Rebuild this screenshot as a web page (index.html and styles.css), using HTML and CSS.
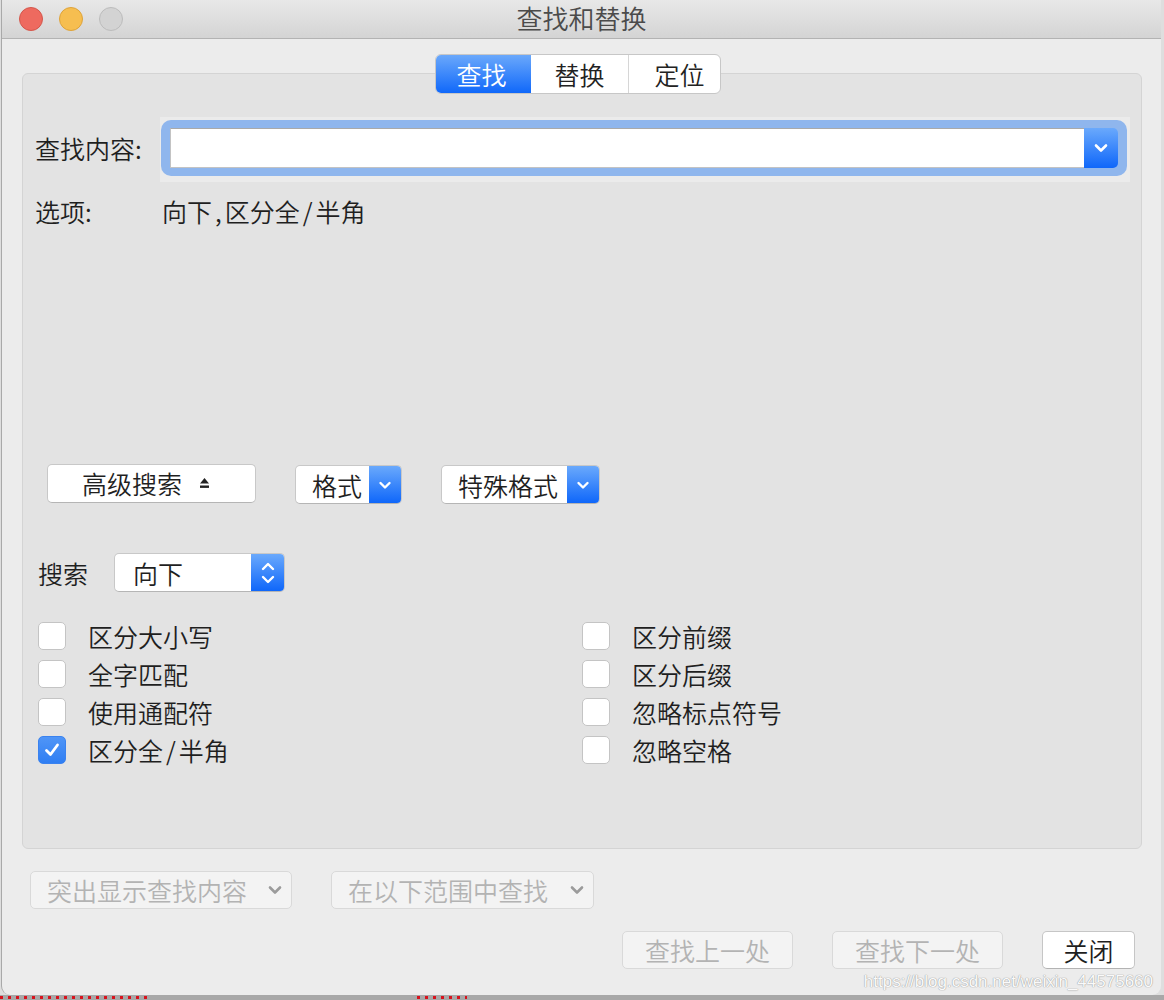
FILE: index.html
```html
<!DOCTYPE html>
<html lang="zh-CN">
<head>
<meta charset="utf-8">
<title>查找和替换</title>
<link rel="stylesheet" href="styles.css">
</head>
<body>
<div class="window">
  <div class="titlebar">
    <div class="lights">
      <span class="light red"></span>
      <span class="light yellow"></span>
      <span class="light gray"></span>
    </div>
    <div class="title">查找和替换</div>
    <div></div>
  </div>
  <div class="content">
    <div class="tabs">
      <div class="tab tab-1 active">查找</div>
      <div class="tab tab-2">替换</div>
      <div class="tab tab-3">定位</div>
    </div>
    <div class="panel">
      <div class="find-row">
        <div class="find-label">查找内容:</div>
        <div class="combo-wrap">
          <div class="combo-ring">
            <div class="combo">
              <div class="combo-field"></div>
              <div class="combo-btn">
                <svg width="16" height="10" viewBox="0 0 16 10"><polyline points="3,2.5 8,7.5 13,2.5" fill="none" stroke="#fff" stroke-width="2.6" stroke-linecap="round" stroke-linejoin="round"/></svg>
              </div>
            </div>
          </div>
        </div>
      </div>
      <div class="options-row">
        <span class="opt-label">选项:</span>
        <span class="opt-value">向下<span class="punc">,</span>区分全<span class="punc">/</span>半角</span>
      </div>
      <div class="btn-row">
        <div class="btn adv-btn">
          <span>高级搜索</span>
          <svg class="eject" width="13" height="16" viewBox="0 0 13 16"><polygon points="6.5,2 11,7.5 2,7.5" fill="#222"/><rect x="2" y="9.5" width="9" height="2.4" fill="#222"/></svg>
        </div>
        <div class="btn pop fmt-btn">
          <span class="pop-text">格式</span>
          <span class="pop-blue"><svg width="14" height="10" viewBox="0 0 14 10"><polyline points="2.5,3 7,7.5 11.5,3" fill="none" stroke="#fff" stroke-width="2.4" stroke-linecap="round" stroke-linejoin="round"/></svg></span>
        </div>
        <div class="btn pop special-btn">
          <span class="pop-text">特殊格式</span>
          <span class="pop-blue"><svg width="14" height="10" viewBox="0 0 14 10"><polyline points="2.5,3 7,7.5 11.5,3" fill="none" stroke="#fff" stroke-width="2.4" stroke-linecap="round" stroke-linejoin="round"/></svg></span>
        </div>
      </div>
      <div class="search-row">
        <div class="search-label">搜索</div>
        <div class="btn pop search-pop">
          <span class="pop-text search-text">向下</span>
          <span class="pop-blue stepper"><svg width="16" height="26" viewBox="0 0 16 26"><polyline points="3,9 8,4 13,9" fill="none" stroke="#fff" stroke-width="2.4" stroke-linecap="round" stroke-linejoin="round"/><polyline points="3,17 8,22 13,17" fill="none" stroke="#fff" stroke-width="2.4" stroke-linecap="round" stroke-linejoin="round"/></svg></span>
        </div>
      </div>
      <div class="checks">
        <div class="check"><span class="box"></span><span>区分大小写</span></div>
        <div class="check"><span class="box"></span><span>区分前缀</span></div>
        <div class="check"><span class="box"></span><span>全字匹配</span></div>
        <div class="check"><span class="box"></span><span>区分后缀</span></div>
        <div class="check"><span class="box"></span><span>使用通配符</span></div>
        <div class="check"><span class="box"></span><span>忽略标点符号</span></div>
        <div class="check"><span class="box checked"><svg width="20" height="20" viewBox="0 0 20 20"><polyline points="4.5,10.5 8.5,14.5 15.5,5" fill="none" stroke="#fff" stroke-width="2.8" stroke-linecap="round" stroke-linejoin="round"/></svg></span><span>区分全<span class="punc">/</span>半角</span></div>
        <div class="check"><span class="box"></span><span>忽略空格</span></div>
      </div>
    </div>
    <div class="popup-row">
      <div class="dis-pop pop-1">
        <span>突出显示查找内容</span>
        <svg width="16" height="10" viewBox="0 0 16 10"><polyline points="3,2.5 8,7.5 13,2.5" fill="none" stroke="#9b9b9b" stroke-width="2.6" stroke-linecap="round" stroke-linejoin="round"/></svg>
      </div>
      <div class="dis-pop pop-2">
        <span>在以下范围中查找</span>
        <svg width="16" height="10" viewBox="0 0 16 10"><polyline points="3,2.5 8,7.5 13,2.5" fill="none" stroke="#9b9b9b" stroke-width="2.6" stroke-linecap="round" stroke-linejoin="round"/></svg>
      </div>
    </div>
    <div class="action-row">
      <div class="act disabled">查找上一处</div>
      <div class="act disabled">查找下一处</div>
      <div class="act close">关闭</div>
    </div>
  </div>
  <div class="watermark">https://blog.csdn.net/weixin_44575660</div>
</div>
<div class="under">
  <span class="squig s1"></span>
  <span class="gap g1"></span>
  <span class="squig s2"></span>
</div>
</body>
</html>
```
FILE: styles.css
```css
* { box-sizing: border-box; }

html, body {
  margin: 0;
  padding: 0;
}

body {
  width: 1164px;
  height: 1000px;
  overflow: hidden;
  background: #dedede;
  font-family: "Noto Sans CJK SC", "Noto Sans", sans-serif;
  font-weight: 350;
  color: #1f1f1f;
}

.window {
  position: relative;
  margin-left: 1px;
  width: 1160px;
  height: 995px;
  background: #ececec;
  border-left: 1px solid #a9a9a9;
  border-radius: 0 0 9px 9px;
  overflow: hidden;
}

.titlebar {
  height: 39px;
  border-bottom: 1px solid #b3b3b3;
  background: linear-gradient(#e8e8e8, #d4d4d4);
  display: grid;
  grid-template-columns: 1fr auto 1fr;
  align-items: center;
}

.lights {
  display: flex;
  gap: 16px;
  padding-left: 17px;
}

.light {
  width: 24px;
  height: 24px;
  border-radius: 50%;
  display: block;
}

.red { background: #ee6a5f; border: 1px solid #d4574c; }
.yellow { background: #f6be50; border: 1px solid #dea33a; }
.gray { background: #d3d3d3; border: 1px solid #bcbcbc; }

.title {
  font-size: 26px;
  line-height: 30px;
  margin-top: -3px;
  color: #4b4b4b;
}

.content {
  padding: 15px 19px 0 20px;
}

.tabs {
  position: relative;
  z-index: 1;
  display: flex;
  width: max-content;
  margin-left: 413px;
  height: 40px;
  background: #fff;
  border: 1px solid #c7c7c7;
  border-radius: 6px;
  overflow: hidden;
}

.tab {
  display: flex;
  align-items: center;
  justify-content: center;
  font-size: 25px;
  color: #222;
}

.tab-1 { width: 95px; padding-right: 4px; }
.tab-2 { width: 98px; border-right: 1px solid #d6d6d6; }
.tab-3 { width: 91px; padding-left: 10px; }

.tab.active {
  background: linear-gradient(#6aa8fb, #1068fa);
  color: #fff;
}

.panel {
  margin-top: -21px;
  height: 776px;
  background: #e3e3e3;
  border: 1px solid #d4d4d4;
  border-radius: 6px;
  padding-top: 43px;
}

.find-row {
  display: flex;
  align-items: flex-start;
}

.find-label {
  width: 137px;
  padding-left: 12px;
  font-size: 25px;
  line-height: 30px;
  margin-top: 16px;
}

.combo-wrap {
  width: 970px;
  height: 65px;
  background: #ebebeb;
  padding: 3px 3px 6px 1px;
}

.combo-ring {
  height: 56px;
  background: #8fb6ed;
  border-radius: 10px;
  padding: 8px 9px;
}

.combo {
  display: flex;
  height: 40px;
}

.combo-field {
  flex: 1;
  background: #fff;
  border: 1px solid #c3c3c3;
  border-top-color: #a9a9a9;
  border-right: none;
}

.combo-btn {
  width: 34px;
  background: linear-gradient(#6aa9fc, #0f67fa);
  border-radius: 0 5px 5px 0;
  display: flex;
  align-items: center;
  justify-content: center;
}

.options-row {
  margin-top: 14px;
  display: flex;
  font-size: 25px;
  line-height: 30px;
}

.opt-label {
  width: 139px;
  padding-left: 12px;
}

.punc {
  padding: 0 3px;
}

.btn-row {
  margin-top: 237px;
  height: 40px;
  display: flex;
  align-items: center;
  gap: 39px;
  padding-left: 24px;
}

.btn {
  height: 39px;
  background: #fff;
  border: 1px solid #c8c8c8;
  border-bottom-color: #b5b5b5;
  border-radius: 5px;
  font-size: 25px;
  color: #1f1f1f;
  display: flex;
  align-items: center;
}

.adv-btn {
  width: 209px;
  justify-content: center;
  gap: 16px;
  padding-right: 10px;
}

.eject { margin-top: 2px; }

.pop { overflow: hidden; }

.pop-text {
  flex: 1;
  padding-left: 16px;
}

.pop-blue {
  width: 32px;
  height: 100%;
  background: linear-gradient(#6aa9fc, #0f67fa);
  display: flex;
  align-items: center;
  justify-content: center;
}

.fmt-btn { width: 107px; margin-top: 3px; }
.special-btn { width: 159px; margin-top: 3px; }

.search-row {
  margin-top: 50px;
  display: flex;
  align-items: center;
}

.search-label {
  width: 91px;
  padding-left: 15px;
  font-size: 25px;
}

.search-pop { width: 171px; }
.search-text { padding-left: 18px; }
.stepper { width: 33px; }

.checks {
  margin-top: 30px;
  padding-left: 15px;
  display: grid;
  grid-template-columns: 544px 1fr;
  row-gap: 10px;
}

.check {
  display: flex;
  align-items: center;
  gap: 22px;
  height: 28px;
  font-size: 25px;
}

.box {
  width: 28px;
  height: 28px;
  background: #fff;
  border: 1px solid #c4c4c4;
  border-radius: 5px;
  display: flex;
  align-items: center;
  justify-content: center;
}

.box.checked {
  background: linear-gradient(#4f95f7, #2f7ef3);
  border-color: #3a82ef;
}

.popup-row {
  margin-top: 22px;
  padding-left: 8px;
  display: flex;
  gap: 39px;
}

.dis-pop {
  height: 38px;
  background: #f3f3f3;
  border: 1px solid #d9d9d9;
  border-radius: 5px;
  display: flex;
  align-items: center;
  justify-content: space-between;
  padding: 0 8px 0 16px;
  font-size: 25px;
  color: #b3b3b3;
}

.pop-1 { width: 262px; }
.pop-2 { width: 263px; }

.action-row {
  margin-top: 22px;
  padding-right: 7px;
  display: flex;
  justify-content: flex-end;
  gap: 39px;
}

.act {
  height: 38px;
  border-radius: 5px;
  display: flex;
  align-items: center;
  justify-content: center;
  font-size: 25px;
}

.act.disabled {
  width: 171px;
  background: #f3f3f3;
  border: 1px solid #d9d9d9;
  color: #b3b3b3;
}

.act.close {
  width: 93px;
  background: #fff;
  border: 1px solid #c6c6c6;
  border-bottom-color: #b3b3b3;
  color: #1e1e1e;
}

.watermark {
  position: absolute;
  right: 8px;
  bottom: 2px;
  font-family: "Liberation Sans", Arial, sans-serif;
  font-weight: 400;
  font-size: 17px;
  line-height: 22px;
  color: #fafafa;
  text-shadow: 0 0 1px #9c9c9c, 0 0 1px #9c9c9c;
}

.under {
  height: 5px;
  background: #a8a8a8;
  display: flex;
}

.squig {
  height: 3px;
  margin-top: 1px;
  background: repeating-linear-gradient(90deg, #d8121d 0 3px, #a8a8a8 3px 8px);
}

.s1 { width: 152px; }
.g1 { width: 265px; }
.s2 { width: 50px; }
```
